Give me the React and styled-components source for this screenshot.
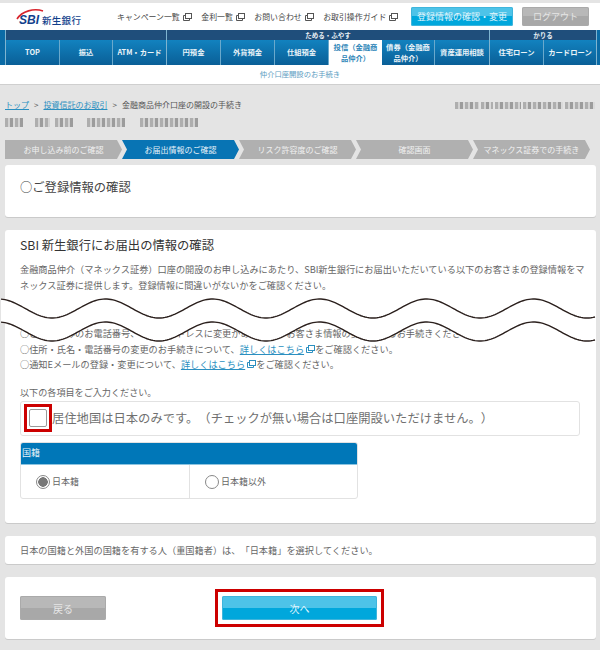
import React from 'react';
import styled, { createGlobalStyle } from 'styled-components';

const GlobalStyle = createGlobalStyle`
	html, body {
		margin: 0;
		padding: 0;
		background: #e4e4e4;
	}
	body {
		font-family: "Noto Sans CJK JP", "Liberation Sans", sans-serif;
		color: #555;
		/* full width punctuation like the original page */
		text-spacing-trim: space-all;
	}
`;

const Page = styled.div`
	position: relative;
	width: 600px;
	height: 650px;
	overflow: hidden;
	padding-top: 3px;
	box-sizing: border-box;
	background: #e4e4e4;
`;

/* Header */
const Header = styled.header`
	display: flex;
	align-items: center;
	height: 27px;
	background: #fff;
	box-sizing: border-box;
	padding-left: 16px;
`;
const Logo = styled.div`
	position: relative;
	display: flex;
	align-items: flex-end;
	width: 101px;
	height: 20px;
	flex: none;
	svg {
		position: absolute;
		left: 0;
		top: 0;
	}
`;
const LogoSbi = styled.span`
	font: italic 700 12px/12px "Liberation Sans", sans-serif;
	color: #123f8c;
	padding-left: 3px;
	margin-bottom: 1px;
`;
const LogoName = styled.span`
	font-size: 9.5px;
	line-height: 12px;
	font-weight: 500;
	color: #123f8c;
	letter-spacing: 0.3px;
	margin: 0 0 1px 3px;
`;
const HeaderLinks = styled.nav`
	display: flex;
	gap: 9.5px;
	width: 282px;
	flex: none;
`;
const HeaderLink = styled.a`
	display: flex;
	align-items: center;
	gap: 3px;
	font-size: 7.9px;
	line-height: 12px;
	color: #444;
	white-space: nowrap;
`;
const TwoToneButton = styled.button`
	display: block;
	border: 0;
	padding: 0;
	font-family: inherit;
	color: ${p => (p.$tone === 'blue' ? '#e3f6fc' : '#e6e6e6')};
	border-radius: 2px;
	background: ${p =>
		p.$tone === 'blue'
			? 'linear-gradient(#4dc3e8 50%, #00a7dc 50%)'
			: 'linear-gradient(#b8b8b8 50%, #a8a8a8 50%)'};
	box-shadow: 0 0 0 1px ${p => (p.$tone === 'blue' ? '#3fb5dc' : '#aaa')} inset;
`;
const ProfileButton = styled(TwoToneButton)`
	width: 102px;
	height: 19px;
	font-size: 9px;
	margin-left: 12px;
`;
const LogoutButton = styled(TwoToneButton)`
	width: 67px;
	height: 19px;
	font-size: 9px;
	margin-left: 9px;
`;

/* Global nav */
const Nav = styled.div`
	display: flex;
	height: 35px;
	padding: 0 5px;
	background: #0a6ba6;
`;
const NavGroup = styled.div`
	display: flex;
	flex-direction: column;
	border-left: 1px solid #7fb4d0;
	&:last-child {
		border-right: 1px solid #7fb4d0;
	}
`;
const NavBand = styled.div`
	height: 10px;
	font-size: 6.5px;
	line-height: 10px;
	font-weight: 700;
	text-align: center;
	color: #e8eef4;
	background: #1f4e7b;
`;
const NavTabs = styled.div`
	display: flex;
	height: 25px;
`;
const NavTab = styled.a`
	display: flex;
	align-items: center;
	justify-content: center;
	box-sizing: border-box;
	width: ${p => p.$w}px;
	font-size: 7.3px;
	line-height: 11px;
	font-weight: 700;
	text-align: center;
	white-space: pre-line;
	color: ${p => (p.$active ? '#2f86b8' : '#eaf3f8')};
	background: ${p => (p.$active ? '#fff' : 'linear-gradient(#1282bf, #0a5f97)')};
	border-left: ${p => (p.$first ? '0' : '1px solid #6aa9cc')};
`;
const SubNav = styled.div`
	height: 19px;
	background: #fff;
	border-bottom: 1px solid #cfcfcf;
	text-align: center;
	font-size: 7.3px;
	line-height: 19px;
	color: #5c9cc1;
`;

/* Breadcrumb */
const Crumbs = styled.div`
	display: flex;
	justify-content: space-between;
	align-items: center;
	height: 14px;
	margin-top: 13px;
	padding: 0 5px;
`;
const CrumbTrail = styled.div`
	display: flex;
	gap: 5px;
	font-size: 8px;
	line-height: 14px;
	color: #555;
`;
const CrumbLink = styled.a`
	color: #2b8fc0;
	text-decoration: underline;
`;
const MosaicRow = styled.div`
	display: flex;
	gap: ${p => p.$gap}px;
	height: ${p => p.$h}px;
	filter: blur(0.7px);
`;
const MosaicBit = styled.span`
	display: block;
	width: ${p => p.$w}px;
	margin-left: ${p => p.$skip || 0}px;
	height: 100%;
	background: repeating-linear-gradient(90deg, #aeaeae 0 3px, #d2d2d2 3px 5px, #9c9c9c 5px 8px, #dadada 8px 10px);
`;
const AccountRow = styled(MosaicRow)`
	margin: 6px 0 0 5px;
`;

/* Steps */
const Steps = styled.ol`
	display: flex;
	list-style: none;
	margin: 13px 0 0 5px;
	padding: 0;
`;
const Step = styled.li`
	display: flex;
	align-items: center;
	justify-content: center;
	box-sizing: border-box;
	width: 117px;
	height: 19px;
	font-size: 8px;
	color: ${p => (p.$active ? '#e6f2f9' : '#f0f0f0')};
	background: ${p => (p.$active ? '#0874b4' : '#b0b0b0')};
	clip-path: ${p =>
		p.$first
			? 'polygon(0 0, calc(100% - 5px) 0, 100% 50%, calc(100% - 5px) 100%, 0 100%)'
			: 'polygon(0 0, calc(100% - 5px) 0, 100% 50%, calc(100% - 5px) 100%, 0 100%, 5px 50%)'};
`;

/* Cards */
const Card = styled.section`
	box-sizing: border-box;
	width: 591px;
	margin: ${p => p.$top}px 0 0 5px;
	height: ${p => p.$h}px;
	padding: 0 15px;
	background: #fff;
	border-radius: 3px;
	box-shadow: 0 1px 0 #cacaca;
`;
const PageTitle = styled.h1`
	margin: 0;
	font-size: 12.3px;
	line-height: 18px;
	font-weight: 400;
	color: #444;
	padding-top: 13px;
`;
const SectionTitle = styled.h2`
	margin: 0;
	font-size: 12.3px;
	line-height: 18px;
	font-weight: 400;
	color: #333;
	padding-top: 6px;
`;
const Lead = styled.p`
	margin: 7px 0 0;
	font-size: 9.2px;
	line-height: 16px;
	color: #666;
	white-space: nowrap;
`;
const Notices = styled.div`
	margin-top: 33px;
	font-size: 9.2px;
	line-height: 15.5px;
	color: #666;
	white-space: nowrap;
`;
const TextLink = styled.a`
	color: #2b8fc0;
	text-decoration: underline;
`;
const Prompt = styled.p`
	margin: 12px 0 0;
	font-size: 9.1px;
	line-height: 14px;
	color: #666;
`;
const CheckRow = styled.label`
	display: flex;
	align-items: center;
	box-sizing: border-box;
	width: 560px;
	height: 35px;
	margin-top: 2px;
	padding-left: 3px;
	border: 1px solid #e2e2e2;
	border-radius: 3px;
	font-size: 12.3px;
	color: #707070;
	white-space: nowrap;
`;
const CheckFrame = styled.span`
	display: flex;
	align-items: center;
	justify-content: center;
	box-sizing: border-box;
	width: 28px;
	height: 28px;
	flex: none;
	border: 3px solid #cc0000;
`;
const CheckBox = styled.span`
	display: block;
	box-sizing: border-box;
	width: 18px;
	height: 18px;
	border: 1px solid #999;
	border-radius: 2px;
	background: #fff;
`;
const FieldTable = styled.div`
	box-sizing: border-box;
	width: 338px;
	height: 57px;
	margin-top: 6px;
	border: 1px solid #e2e2e2;
	border-radius: 3px;
	overflow: hidden;
`;
const FieldHead = styled.div`
	height: 22px;
	margin: -1px -1px 0;
	padding-left: 2px;
	background: #0077b8;
	border-bottom: 1px solid #8cc4e0;
	font-size: 9px;
	line-height: 22px;
	color: #e8f3f9;
`;
const FieldOptions = styled.div`
	display: flex;
	height: 34px;
`;
const RadioCell = styled.div`
	display: flex;
	align-items: center;
	gap: 2px;
	box-sizing: border-box;
	width: 168px;
	padding: 0 0 0 15px;
	font-size: 9px;
	color: #666;
	& + & {
		border-left: 1px solid #e2e2e2;
	}
`;
const Radio = styled.span`
	display: block;
	box-sizing: border-box;
	width: 14px;
	height: 14px;
	border: 1px solid #888;
	border-radius: 50%;
	background: ${p => (p.$on ? 'radial-gradient(circle, #777 0 4.5px, #fff 5px)' : '#fff')};
`;
const Note = styled.p`
	margin: 0;
	font-size: 9.2px;
	line-height: 28px;
	color: #666;
	white-space: nowrap;
`;
const Actions = styled.div`
	display: flex;
	align-items: center;
	height: 100%;
`;
const BackButton = styled(TwoToneButton)`
	width: 86px;
	height: 24px;
	font-size: 10px;
`;
const NextFrame = styled.div`
	box-sizing: border-box;
	width: 169px;
	height: 38px;
	margin-left: 109px;
	padding: 4px;
	border: 3px solid #cc0000;
`;
const NextButton = styled(TwoToneButton)`
	width: 155px;
	height: 24px;
	font-size: 10px;
`;

/* Wave cut drawn over the middle of the long card */
const WaveCut = styled.svg`
	position: absolute;
	left: 1px;
	top: 296px;
`;

function ExternalIcon({ color = '#555' }) {
	return (
		<svg width="9" height="8" viewBox="0 0 9 8" fill="none" stroke={color} strokeWidth="1">
			<rect x="2.5" y="0.5" width="6" height="5" />
			<path d="M2.5 2.5H0.5V7.5H6.5V5.5" />
		</svg>
	);
}

// sine wave, period about 107px, first trough near x=52
function wavePoints(top) {
	const points = [];
	for (let x = 0; x <= 595; x += 2) {
		const y = top + 9.5 + 9.5 * Math.cos((2 * Math.PI * (x - 51)) / 107);
		points.push(`${x} ${y.toFixed(2)}`);
	}
	return points;
}

function Wave() {
	const upper = wavePoints(3);
	const lower = wavePoints(26);
	return (
		<WaveCut width="595" height="50" viewBox="0 0 595 50">
			<path d={`M${upper.join('L')}L${[...lower].reverse().join('L')}Z`} fill="#fff" />
			<path d={`M${upper.join('L')}`} fill="none" stroke="#2a1f1c" strokeWidth="1.4" />
			<path d={`M${lower.join('L')}`} fill="none" stroke="#2a1f1c" strokeWidth="1.4" />
		</WaveCut>
	);
}

export default function App() {
	return (
		<Page>
			<GlobalStyle />
			<Header>
				<Logo>
					<svg width="40" height="14" viewBox="0 0 40 14" fill="none">
						<path d="M1 12 C 6 4 18 1 27 4" stroke="#d8242c" strokeWidth="1.6" />
					</svg>
					<LogoSbi>SBI</LogoSbi>
					<LogoName>新生銀行</LogoName>
				</Logo>
				<HeaderLinks>
					<HeaderLink>キャンペーン一覧<ExternalIcon /></HeaderLink>
					<HeaderLink>金利一覧<ExternalIcon /></HeaderLink>
					<HeaderLink>お問い合わせ<ExternalIcon /></HeaderLink>
					<HeaderLink>お取引操作ガイド<ExternalIcon /></HeaderLink>
				</HeaderLinks>
				<ProfileButton $tone="blue">登録情報の確認・変更</ProfileButton>
				<LogoutButton>ログアウト</LogoutButton>
			</Header>
			<Nav>
				<NavGroup>
					<NavBand />
					<NavTabs>
						<NavTab $w={53} $first>TOP</NavTab>
						<NavTab $w={53}>振込</NavTab>
						<NavTab $w={54}>ATM・カード</NavTab>
					</NavTabs>
				</NavGroup>
				<NavGroup>
					<NavBand>ためる・ふやす</NavBand>
					<NavTabs>
						<NavTab $w={53} $first>円預金</NavTab>
						<NavTab $w={54}>外貨預金</NavTab>
						<NavTab $w={54}>仕組預金</NavTab>
						<NavTab $w={54} $active>{'投信（金融商\n品仲介）'}</NavTab>
						<NavTab $w={52} $first>{'債券（金融商\n品仲介）'}</NavTab>
						<NavTab $w={55}>資産運用相談</NavTab>
					</NavTabs>
				</NavGroup>
				<NavGroup>
					<NavBand>かりる</NavBand>
					<NavTabs>
						<NavTab $w={53} $first>住宅ローン</NavTab>
						<NavTab $w={53}>カードローン</NavTab>
					</NavTabs>
				</NavGroup>
			</Nav>
			<SubNav>仲介口座開設のお手続き</SubNav>
			<Crumbs>
				<CrumbTrail>
					<CrumbLink>トップ</CrumbLink>
					<span>&gt;</span>
					<CrumbLink>投資信託のお取引</CrumbLink>
					<span>&gt;</span>
					<span>金融商品仲介口座の開設の手続き</span>
				</CrumbTrail>
				<MosaicRow $gap={2} $h={7}>
					<MosaicBit $w={24} />
					<MosaicBit $w={12} />
					<MosaicBit $w={26} />
					<MosaicBit $w={40} />
					<MosaicBit $w={30} />
				</MosaicRow>
			</Crumbs>
			<AccountRow $gap={0} $h={9}>
				<MosaicBit $w={18} />
				<MosaicBit $w={15} $skip={12} />
				<MosaicBit $w={18} $skip={5} />
				<MosaicBit $w={38} $skip={14} />
				<MosaicBit $w={58} $skip={15} />
			</AccountRow>
			<Steps>
				<Step $first>お申し込み前のご確認</Step>
				<Step $active>お届出情報のご確認</Step>
				<Step>リスク許容度のご確認</Step>
				<Step>確認画面</Step>
				<Step>マネックス証券での手続き</Step>
			</Steps>
			<Card $top={6} $h={52}>
				<PageTitle>○ご登録情報の確認</PageTitle>
			</Card>
			<Card $top={13} $h={293}>
				<SectionTitle>SBI 新生銀行にお届出の情報の確認</SectionTitle>
				<Lead>
					金融商品仲介（マネックス証券）口座の開設のお申し込みにあたり、SBI新生銀行にお届出いただいている以下のお客さまの登録情報をマ
					<br />
					ネックス証券に提供します。登録情報に間違いがないかをご確認ください。
				</Lead>
				<Notices>
					○ご登録済みのお電話番号、メールアドレスに変更がある場合、お客さま情報の変更をするお手続きください。
					<br />
					○住所・氏名・電話番号の変更のお手続きについて、<TextLink>詳しくはこちら</TextLink> <ExternalIcon color="#2b8fc0" />をご確認ください。
					<br />
					○通知Eメールの登録・変更について、<TextLink>詳しくはこちら</TextLink> <ExternalIcon color="#2b8fc0" />をご確認ください。
				</Notices>
				<Prompt>以下の各項目をご入力ください。</Prompt>
				<CheckRow>
					<CheckFrame><CheckBox /></CheckFrame>
					居住地国は日本のみです。（チェックが無い場合は口座開設いただけません。）
				</CheckRow>
				<FieldTable>
					<FieldHead>国籍</FieldHead>
					<FieldOptions>
						<RadioCell><Radio $on />日本籍</RadioCell>
						<RadioCell><Radio />日本籍以外</RadioCell>
					</FieldOptions>
				</FieldTable>
			</Card>
			<Card $top={13} $h={28}>
				<Note>日本の国籍と外国の国籍を有する人（重国籍者）は、「日本籍」を選択してください。</Note>
			</Card>
			<Card $top={13} $h={62}>
				<Actions>
					<BackButton>戻る</BackButton>
					<NextFrame>
						<NextButton $tone="blue">次へ</NextButton>
					</NextFrame>
				</Actions>
			</Card>
			<Wave />
		</Page>
	);
}
